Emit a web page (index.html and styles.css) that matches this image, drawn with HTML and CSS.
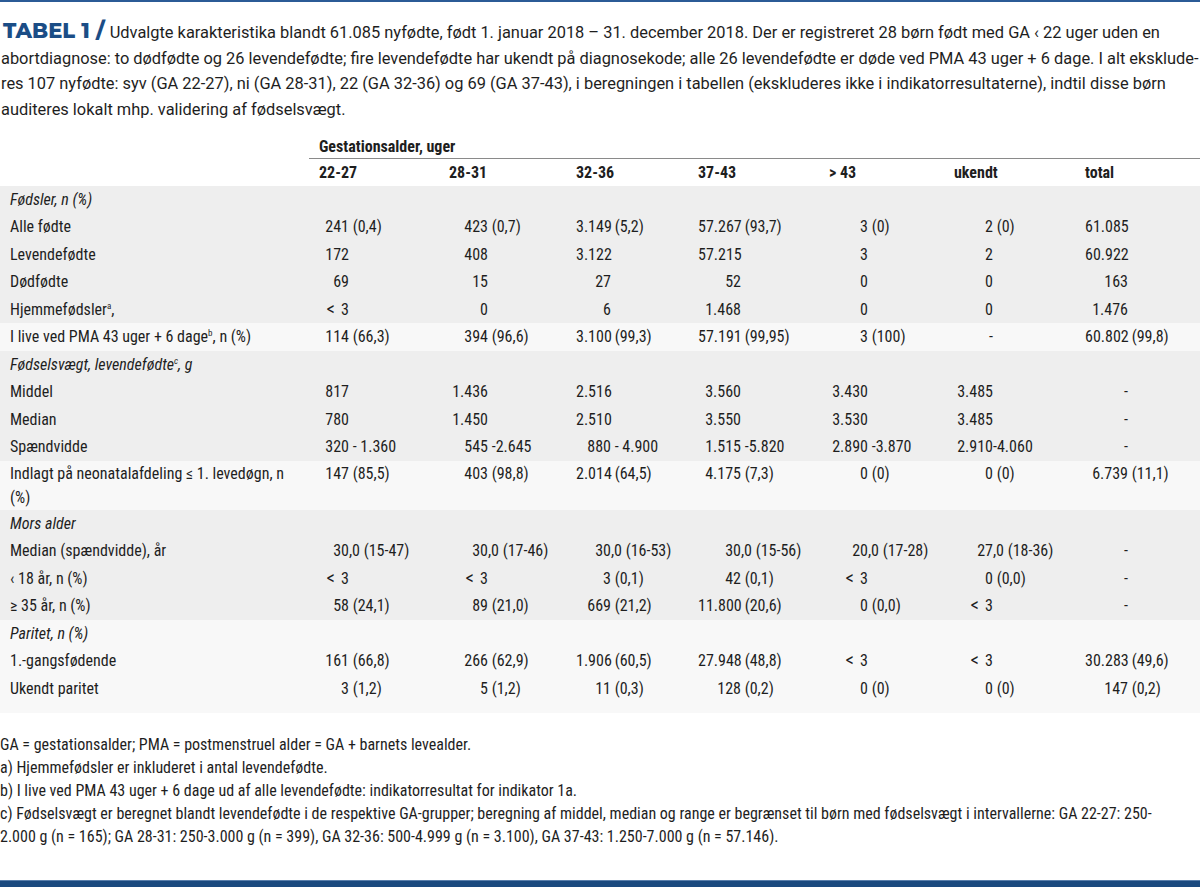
FILE: index.html
```html
<!DOCTYPE html>
<html lang="da">
<head>
<meta charset="utf-8">
<title>Tabel 1</title>
<link rel="stylesheet" href="styles.css">
</head>
<body>
<div class="page">
  <div class="intro">
    <span class="line"><span class="tag">TABEL 1 /</span> Udvalgte karakteristika blandt 61.085 nyfødte, født 1. januar 2018 – 31. december 2018. Der er registreret 28 børn født med GA ‹ 22 uger uden en</span>
    <span class="line">abortdiagnose: to dødfødte og 26 levendefødte; fire levendefødte har ukendt på diagnosekode; alle 26 levendefødte er døde ved PMA 43 uger + 6 dage. I alt eksklude-</span>
    <span class="line">res 107 nyfødte: syv (GA 22-27), ni (GA 28-31), 22 (GA 32-36) og 69 (GA 37-43), i beregningen i tabellen (ekskluderes ikke i indikatorresultaterne), indtil disse børn</span>
    <span class="line">auditeres lokalt mhp. validering af fødselsvægt.</span>
  </div>

  <table class="t">
    <colgroup>
      <col class="c0"><col class="c1"><col class="c2"><col class="c3"><col class="c4"><col class="c5"><col class="c6"><col class="c7">
    </colgroup>
    <thead>
      <tr class="h1"><td></td><th colspan="7">Gestationsalder, uger</th></tr>
      <tr class="h2"><td></td><th>22-27</th><th>28-31</th><th>32-36</th><th>37-43</th><th>&gt; 43</th><th>ukendt</th><th>total</th></tr>
    </thead>
    <tbody class="g">
      <tr><td class="sec" colspan="8">Fødsler, n (%)</td></tr>
      <tr><td>Alle fødte</td><td><span class="n">241</span> (0,4)</td><td><span class="n">423</span> (0,7)</td><td><span class="n">3.149</span> (5,2)</td><td><span class="n">57.267</span> (93,7)</td><td><span class="n">3</span> (0)</td><td><span class="n">2</span> (0)</td><td><span class="n">61.085</span></td></tr>
      <tr><td>Levendefødte</td><td><span class="n">172</span></td><td><span class="n">408</span></td><td><span class="n">3.122</span></td><td><span class="n">57.215</span></td><td><span class="n">3</span></td><td><span class="n">2</span></td><td><span class="n">60.922</span></td></tr>
      <tr><td>Dødfødte</td><td><span class="n">69</span></td><td><span class="n">15</span></td><td><span class="n">27</span></td><td><span class="n">52</span></td><td><span class="n">0</span></td><td><span class="n">0</span></td><td><span class="n">163</span></td></tr>
      <tr><td>Hjemmefødsler<sup>a</sup>,</td><td><span class="n"><i class="lt">&lt;</i>3</span></td><td><span class="n">0</span></td><td><span class="n">6</span></td><td><span class="n">1.468</span></td><td><span class="n">0</span></td><td><span class="n">0</span></td><td><span class="n">1.476</span></td></tr>
    </tbody>
    <tbody class="l">
      <tr><td>I live ved PMA 43 uger + 6 dage<sup>b</sup>, n (%)</td><td><span class="n">114</span> (66,3)</td><td><span class="n">394</span> (96,6)</td><td><span class="n">3.100</span> (99,3)</td><td><span class="n">57.191</span> (99,95)</td><td><span class="n">3</span> (100)</td><td><span class="n">-</span></td><td><span class="n">60.802</span> (99,8)</td></tr>
    </tbody>
    <tbody class="g">
      <tr><td class="sec" colspan="8">Fødselsvægt, levendefødte<sup>c</sup>, g</td></tr>
      <tr><td>Middel</td><td><span class="n">817</span></td><td><span class="n">1.436</span></td><td><span class="n">2.516</span></td><td><span class="n">3.560</span></td><td><span class="n">3.430</span></td><td><span class="n">3.485</span></td><td><span class="n">-</span></td></tr>
      <tr><td>Median</td><td><span class="n">780</span></td><td><span class="n">1.450</span></td><td><span class="n">2.510</span></td><td><span class="n">3.550</span></td><td><span class="n">3.530</span></td><td><span class="n">3.485</span></td><td><span class="n">-</span></td></tr>
      <tr><td>Spændvidde</td><td><span class="n">320</span> - 1.360</td><td><span class="n">545</span> -2.645</td><td><span class="n">880</span> - 4.900</td><td><span class="n">1.515</span> -5.820</td><td><span class="n">2.890</span> -3.870</td><td><span class="n">2.910</span>-4.060</td><td><span class="n">-</span></td></tr>
    </tbody>
    <tbody class="l">
      <tr class="tall"><td>Indlagt på neonatalafdeling ≤ 1. levedøgn, n (%)</td><td><span class="n">147</span> (85,5)</td><td><span class="n">403</span> (98,8)</td><td><span class="n">2.014</span> (64,5)</td><td><span class="n">4.175</span> (7,3)</td><td><span class="n">0</span> (0)</td><td><span class="n">0</span> (0)</td><td><span class="n">6.739</span> (11,1)</td></tr>
    </tbody>
    <tbody class="g">
      <tr><td class="sec" colspan="8">Mors alder</td></tr>
      <tr><td>Median (spændvidde), år</td><td class="m"><span class="n">30,0</span> (15-47)</td><td class="m"><span class="n">30,0</span> (17-46)</td><td class="m"><span class="n">30,0</span> (16-53)</td><td class="m"><span class="n">30,0</span> (15-56)</td><td class="m"><span class="n">20,0</span> (17-28)</td><td class="m"><span class="n">27,0</span> (18-36)</td><td><span class="n">-</span></td></tr>
      <tr><td>‹ 18 år, n (%)</td><td><span class="n"><i class="lt">&lt;</i>3</span></td><td><span class="n"><i class="lt">&lt;</i>3</span></td><td><span class="n">3</span> (0,1)</td><td><span class="n">42</span> (0,1)</td><td><span class="n"><i class="lt">&lt;</i>3</span></td><td><span class="n">0</span> (0,0)</td><td><span class="n">-</span></td></tr>
      <tr><td>≥ 35 år, n (%)</td><td><span class="n">58</span> (24,1)</td><td><span class="n">89</span> (21,0)</td><td><span class="n">669</span> (21,2)</td><td><span class="n">11.800</span> (20,6)</td><td><span class="n">0</span> (0,0)</td><td><span class="n"><i class="lt">&lt;</i>3</span></td><td><span class="n">-</span></td></tr>
    </tbody>
    <tbody class="l last">
      <tr><td class="sec" colspan="8">Paritet, n (%)</td></tr>
      <tr><td>1.-gangsfødende</td><td><span class="n">161</span> (66,8)</td><td><span class="n">266</span> (62,9)</td><td><span class="n">1.906</span> (60,5)</td><td><span class="n">27.948</span> (48,8)</td><td><span class="n"><i class="lt">&lt;</i>3</span></td><td><span class="n"><i class="lt">&lt;</i>3</span></td><td><span class="n">30.283</span> (49,6)</td></tr>
      <tr><td>Ukendt paritet</td><td><span class="n">3</span> (1,2)</td><td><span class="n">5</span> (1,2)</td><td><span class="n">11</span> (0,3)</td><td><span class="n">128</span> (0,2)</td><td><span class="n">0</span> (0)</td><td><span class="n">0</span> (0)</td><td><span class="n">147</span> (0,2)</td></tr>
    </tbody>
  </table>

  <div class="notes">
    <p>GA = gestationsalder; PMA = postmenstruel alder = GA + barnets levealder.</p>
    <p>a) Hjemmefødsler er inkluderet i antal levendefødte.</p>
    <p>b) I live ved PMA 43 uger + 6 dage ud af alle levendefødte: indikatorresultat for indikator 1a.</p>
    <p>c) Fødselsvægt er beregnet blandt levendefødte i de respektive GA-grupper; beregning af middel, median og range er begrænset til børn med fødselsvægt i intervallerne: GA 22-27: 250-<br>2.000 g (n = 165); GA 28-31: 250-3.000 g (n = 399), GA 32-36: 500-4.999 g (n = 3.100), GA 37-43: 1.250-7.000 g (n = 57.146).</p>
  </div>

  <div class="bar"></div>
</div>
</body>
</html>
```
FILE: styles.css
```css
html, body {
  margin: 0;
  padding: 0;
  background: #ffffff;
}

.page {
  width: 1200px;
  height: 887px;
  display: flex;
  flex-direction: column;
  border-top: 2px solid #2b5b96;
  box-sizing: border-box;
  color: #1e1e1e;
}

.intro {
  padding: 16px 0 0 1px;
  font-family: Roboto, "Liberation Sans", sans-serif;
  font-size: 16.4px;
  line-height: 25.7px;
  color: #1e1e1e;
}

.intro .line {
  display: block;
  white-space: nowrap;
}

.tag {
  font-family: Montserrat, Lato, "Liberation Sans", sans-serif;
  font-weight: 800;
  font-size: 21px;
  color: #1b4d86;
  margin-right: 1px;
  margin-left: 2px;
}

.t {
  margin-top: 11px;
  width: 1200px;
  table-layout: fixed;
  border-collapse: collapse;
  font-family: "Roboto Condensed", Roboto, sans-serif;
  font-size: 16px;
  line-height: 17.5px;
}

.c0 { width: 309px; }
.c1 { width: 130px; }
.c2 { width: 127px; }
.c3 { width: 122px; }
.c4 { width: 131px; }
.c5 { width: 125px; }
.c6 { width: 131px; }
.c7 { width: 125px; }

.t th, .t td {
  padding: 5px 0 5px 10px;
  text-align: left;
  vertical-align: top;
  white-space: nowrap;
}

.t th {
  font-weight: bold;
}

.h1 th {
  padding: 4px 0 3px 10px;
  line-height: 17px;
  border-bottom: 1px solid #8a8a8a;
}

.h2 th {
  padding: 5px 0 5px 10px;
  line-height: 17px;
}

.g { background: #eeeeee; }
.l { background: #f8f8f8; }

.t td.sec {
  font-style: italic;
}

.t sup {
  font-size: 9px;
  line-height: 0;
  vertical-align: 6px;
}

.n {
  display: inline-block;
  text-align: right;
}

.lt {
  font-style: normal;
  font-size: 19px;
  line-height: 0;
  margin-right: 6px;
}

.t td:nth-child(2) .n { width: 30px; }
.t td:nth-child(3) .n { width: 39px; }
.t td:nth-child(4) .n { width: 35px; }
.t td:nth-child(5) .n { width: 43px; }
.t td:nth-child(6) .n { width: 39px; }
.t td:nth-child(7) .n { width: 39px; }
.t td:nth-child(8) .n { width: 43px; }

.t td.m { padding-left: 21px; }

.tall td {
  white-space: normal;
  line-height: 24px;
  padding: 1px 0 0 10px;
}

.tall td:first-child {
  padding-right: 14px;
}

.last tr:last-child td {
  padding-bottom: 15.5px;
}

.notes {
  margin-top: 20px;
  font-family: "Roboto Condensed", Roboto, sans-serif;
  font-size: 16px;
  line-height: 23px;
}

.notes p {
  margin: 0;
  white-space: nowrap;
}

.bar {
  margin-top: auto;
  height: 6px;
  background: #1b4a7f;
  border-top: 1px solid #5a7fab;
}
```
